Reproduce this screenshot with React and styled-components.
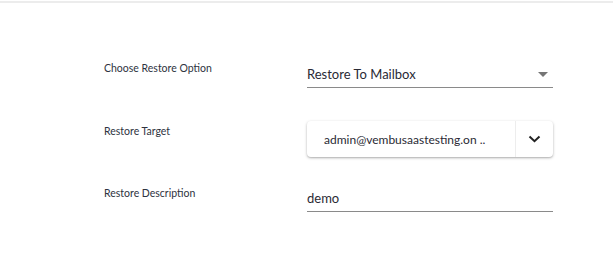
import React from "react";
import styled, { createGlobalStyle } from "styled-components";

const Global = createGlobalStyle`
  html, body { margin: 0; padding: 0; background: #fff; }
  body { font-family: Lato, "Open Sans", sans-serif; }
`;

const Page = styled.div`
  width: 613px;
  height: 271px;
  box-sizing: border-box;
  border-top: 2px solid #ececec;
  margin-top: 1px;
  padding: 51px 0 0 104px;
`;

const Form = styled.div`
  display: grid;
  grid-template-columns: 203px 246px;
  grid-auto-rows: 62px;
`;

const Label = styled.div`
  font-size: 10.5px;
  color: #2e3340;
  padding-top: ${(p) => p.$top || 9}px;
`;

const Underlined = styled.div`
  height: 24px;
  margin-top: ${(p) => p.$top}px;
  border-bottom: 1px solid #8a8a8a;
  display: flex;
  align-items: center;
  justify-content: space-between;
  font-size: 13px;
  color: #2a2a35;
  padding-bottom: 1px;
`;

const Caret = styled.span`
  width: 0;
  height: 0;
  border-left: 5px solid transparent;
  border-right: 5px solid transparent;
  border-top: 5px solid #757575;
  margin-right: 5px;
`;

const Card = styled.div`
  margin-top: 5px;
  height: 36px;
  display: flex;
  background: #fff;
  border-radius: 4px;
  box-shadow: 0 1px 3px rgba(0, 0, 0, 0.28), 0 1px 1px rgba(0, 0, 0, 0.08);
`;

const CardText = styled.div`
  flex: 1;
  display: flex;
  align-items: center;
  padding-left: 17px;
  font-size: 12px;
  color: #2a2a35;
  border-right: 1px solid #ededed;
`;

const CardButton = styled.div`
  width: 37px;
  display: flex;
  align-items: center;
  justify-content: center;
`;

export default function App() {
  return (
    <>
      <Global />
      <Page>
        <Form>
          <Label $top={8}>Choose Restore Option</Label>
          <Underlined $top={8}>
            <span>Restore To Mailbox</span>
            <Caret />
          </Underlined>
          <Label>Restore Target</Label>
          <Card>
            <CardText>admin@vembusaastesting.on ..</CardText>
            <CardButton>
              <svg width="13" height="8" viewBox="0 0 13 8">
                <path d="M1.5 1.5 L6.5 6.2 L11.5 1.5" fill="none" stroke="#222" strokeWidth="2" />
              </svg>
            </CardButton>
          </Card>
          <Label $top={9}>Restore Description</Label>
          <Underlined $top={8}>
            <span>demo</span>
          </Underlined>
        </Form>
      </Page>
    </>
  );
}
